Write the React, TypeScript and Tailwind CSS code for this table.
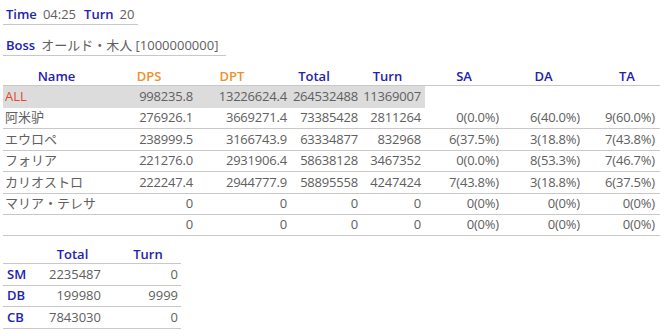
import React from "react";

const font = { fontFamily: '"Open Sans", "Noto Sans CJK JP", sans-serif' };

const rows = [
  ["阿米驴", "276926.1", "3669271.4", "73385428", "2811264", "0(0.0%)", "6(40.0%)", "9(60.0%)"],
  ["エウロペ", "238999.5", "3166743.9", "63334877", "832968", "6(37.5%)", "3(18.8%)", "7(43.8%)"],
  ["フォリア", "221276.0", "2931906.4", "58638128", "3467352", "0(0.0%)", "8(53.3%)", "7(46.7%)"],
  ["カリオストロ", "222247.4", "2944777.9", "58895558", "4247424", "7(43.8%)", "3(18.8%)", "6(37.5%)"],
  ["マリア・テレサ", "0", "0", "0", "0", "0(0%)", "0(0%)", "0(0%)"],
  ["", "0", "0", "0", "0", "0(0%)", "0(0%)", "0(0%)"],
];

const cols = "grid grid-cols-[107px_86px_96px_74px_59px_78px_81px_76px]";

export default function App() {
  return (
    <div className="w-[668px] h-[331px] bg-white text-[13px] text-[#606060] pl-[3px]" style={font}>
      <div className="pt-[6px]">
        <div className="flex items-center gap-[6px] w-[135px] h-[19px] border-b border-[#c8c8c8] pl-[3px]">
          <span className="font-semibold text-[#2222b0]">Time</span>
          <span>04:25</span>
          <span className="font-semibold text-[#2222b0] ml-[2px]">Turn</span>
          <span>20</span>
        </div>
        <div className="flex items-center gap-[6px] w-[223px] h-[20px] border-b border-[#c8c8c8] pl-[3px] mt-[11px]">
          <span className="font-semibold text-[#2222b0]">Boss</span>
          <span>オールド・木人 [1000000000]</span>
        </div>
      </div>

      <div className="mt-[8px] w-[657px]">
        <div className={`${cols} h-[22px] items-center pt-[3px] border-b border-[#c8c8c8] font-semibold`}>
          <div className="text-center text-[#2222b0]">Name</div>
          <div className="text-center pr-[8px] text-[#f0902a]">DPS</div>
          <div className="text-center pr-[24px] text-[#f0902a]">DPT</div>
          <div className="text-center pr-[30px] text-[#2222b0]">Total</div>
          <div className="text-center pr-[16px] text-[#2222b0]">Turn</div>
          <div className="text-center text-[#2222b0]">SA</div>
          <div className="text-center text-[#2222b0]">DA</div>
          <div className="text-center pl-[10px] text-[#2222b0]">TA</div>
        </div>
        <div className={`${cols} h-[22px] items-center tracking-[-0.2px]`}>
          <div className="bg-[#dcdcdc] h-full flex items-center pl-[2px] text-[#e8452a] tracking-normal">ALL</div>
          <div className="bg-[#dcdcdc] h-full flex items-center justify-end pr-[3px]">998235.8</div>
          <div className="bg-[#dcdcdc] h-full flex items-center justify-end pr-[5px]">13226624.4</div>
          <div className="bg-[#dcdcdc] h-full flex items-center justify-end pr-[8px]">264532488</div>
          <div className="bg-[#dcdcdc] h-full flex items-center justify-end pr-[4px]">11369007</div>
          <div></div>
          <div></div>
          <div></div>
        </div>
        {rows.map((r, i) => (
          <div key={i} className={`${cols} h-[21.4px] items-center border-b border-[#c8c8c8] tracking-[-0.2px]`}>
            <div className="pl-[2px] whitespace-nowrap tracking-normal">{r[0]}</div>
            <div className="text-right pr-[3px]">{r[1]}</div>
            <div className="text-right pr-[5px]">{r[2]}</div>
            <div className="text-right pr-[8px]">{r[3]}</div>
            <div className="text-right pr-[4px]">{r[4]}</div>
            <div className="text-right pr-[4px]">{r[5]}</div>
            <div className="text-right pr-[4px]">{r[6]}</div>
            <div className="text-right pr-[5px]">{r[7]}</div>
          </div>
        ))}
      </div>

      <div className="mt-[7px] w-[178px]">
        <div className="grid grid-cols-[37px_65px_76px] h-[21px] items-center pt-[2px] border-b border-[#c8c8c8] font-semibold text-[#2222b0]">
          <div></div>
          <div className="text-center">Total</div>
          <div className="text-center pl-[10px]">Turn</div>
        </div>
        {[
          ["SM", "2235487", "0"],
          ["DB", "199980", "9999"],
          ["CB", "7843030", "0"],
        ].map((r) => (
          <div key={r[0]} className="grid grid-cols-[37px_65px_76px] h-[21.5px] items-center border-b border-[#c8c8c8]">
            <div className="pl-[4px] font-semibold text-[#2222b0]">{r[0]}</div>
            <div className="text-right pr-[4px]">{r[1]}</div>
            <div className="text-right pr-[3px]">{r[2]}</div>
          </div>
        ))}
      </div>
    </div>
  );
}
